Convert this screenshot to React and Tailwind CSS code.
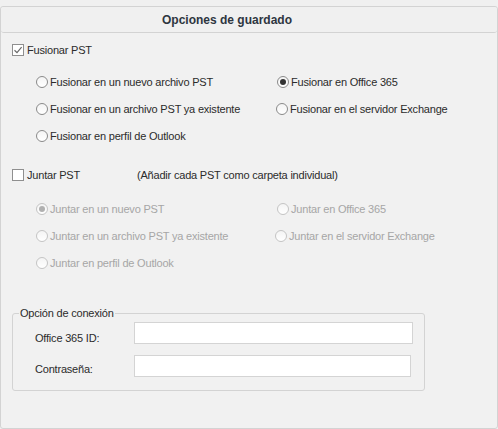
import { useState } from "react";

const font = { fontFamily: "'Liberation Sans', Arial, sans-serif" };

// radio dibujado a mano (estilo Windows)
const Radio = ({ checked, disabled }) => (
  <span
    className={
      "relative inline-flex shrink-0 w-[12px] h-[12px] rounded-full border items-center justify-center bg-gradient-to-b from-[#f4f4f4] to-[#ffffff] " +
      (disabled ? "border-[#c4c4c4]" : "border-[#8a8a8a]")
    }
  >
    {checked && (
      <span
        className={
          "w-[6px] h-[6px] rounded-full " +
          (disabled ? "bg-[#b0b0b0]" : "bg-[#333333]")
        }
      />
    )}
  </span>
);

const Check = ({ checked }) => (
  <span className="inline-flex shrink-0 w-[12px] h-[12px] border border-[#8f8f8f] bg-white items-center justify-center">
    {checked && (
      <svg width="10" height="10" viewBox="0 0 10 10">
        <path d="M1.5 5.2 L4 7.6 L8.6 2.2" fill="none" stroke="#6a6a6a" strokeWidth="1.2" />
      </svg>
    )}
  </span>
);

const Option = ({ label, checked, disabled, onClick }) => (
  <div
    className={
      "flex items-center gap-[2px] cursor-default " +
      (disabled ? "text-[#a6a6a6]" : "text-[#2b2b2b]")
    }
    onClick={disabled ? undefined : onClick}
  >
    <Radio checked={checked} disabled={disabled} />
    <span>{label}</span>
  </div>
);

export default function App() {
  const [merge, setMerge] = useState("o365");

  return (
    <div className="w-[498px] h-[429px] bg-[#f0f0f0] pt-[6px] text-[11px] leading-[14px] tracking-[-0.2px]" style={font}>
      <div className="h-[423px] border border-[#d3d3d3] rounded-[3px] bg-[#f1f1f1] flex flex-col">
        {/* cabecera */}
        <div className="h-[26px] shrink-0 border-b border-[#d3d3d3] rounded-[3px] bg-[#f0f0f0] flex items-center pl-[161px]">
          <span className="font-bold text-[12px] tracking-normal text-[#2e3640]">Opciones de guardado</span>
        </div>

        {/* Fusionar PST */}
        <div className="mt-[7px] h-[20px] flex items-center pl-[11px] gap-[3px] text-[#2b2b2b]">
          <Check checked />
          <span>Fusionar PST</span>
        </div>

        <div className="mt-[8px] grid grid-cols-[241px_1fr] pl-[35px]">
          <div className="h-[27px] flex items-center">
            <Option label="Fusionar en un nuevo archivo PST" checked={merge === "new"} onClick={() => setMerge("new")} />
          </div>
          <div className="h-[27px] flex items-center">
            <Option label="Fusionar en Office 365" checked={merge === "o365"} onClick={() => setMerge("o365")} />
          </div>
          <div className="h-[27px] flex items-center">
            <Option label="Fusionar en un archivo PST ya existente" checked={merge === "existing"} onClick={() => setMerge("existing")} />
          </div>
          <div className="h-[27px] flex items-center -ml-[1px]">
            <Option label="Fusionar en el servidor Exchange" checked={merge === "exchange"} onClick={() => setMerge("exchange")} />
          </div>
          <div className="h-[27px] flex items-center">
            <Option label="Fusionar en perfil de Outlook" checked={merge === "outlook"} onClick={() => setMerge("outlook")} />
          </div>
          <div />
        </div>

        {/* Juntar PST */}
        <div className="mt-[16px] h-[20px] flex items-center pl-[11px] text-[#2b2b2b]">
          <div className="w-[125px] flex items-center gap-[3px]">
            <Check />
            <span>Juntar PST</span>
          </div>
          <span>(Añadir cada PST como carpeta individual)</span>
        </div>

        <div className="mt-[11px] grid grid-cols-[241px_1fr] pl-[35px]">
          <div className="h-[26px] flex items-center">
            <Option label="Juntar en un nuevo PST" checked disabled />
          </div>
          <div className="h-[26px] flex items-center">
            <Option label="Juntar en Office 365" disabled />
          </div>
          <div className="h-[27px] flex items-center">
            <Option label="Juntar en un archivo PST ya existente" disabled />
          </div>
          <div className="h-[27px] flex items-center -ml-[2px]">
            <Option label="Juntar en el servidor Exchange" disabled />
          </div>
          <div className="h-[27px] flex items-center">
            <Option label="Juntar en perfil de Outlook" disabled />
          </div>
          <div />
        </div>

        {/* Opción de conexión */}
        <fieldset className="mt-[30px] ml-[11px] w-[413px] h-[85px] border border-[#d3d3d3] rounded-[3px] pl-[6px] text-[#2b2b2b]">
          <legend className="px-[1px]">Opción de conexión</legend>
          <div className="pl-[16px]">
            <div className="flex items-start mt-[2px]">
              <span className="w-[99px] pt-[9px]">Office 365 ID:</span>
              <input className="w-[279px] h-[22px] border border-[#d4d4d4] bg-white outline-none" />
            </div>
            <div className="flex items-start mt-[10px]">
              <span className="w-[99px] pt-[7px]">Contraseña:</span>
              <input type="password" className="w-[277px] h-[22px] border border-[#d4d4d4] bg-white outline-none" />
            </div>
          </div>
        </fieldset>
      </div>
    </div>
  );
}
